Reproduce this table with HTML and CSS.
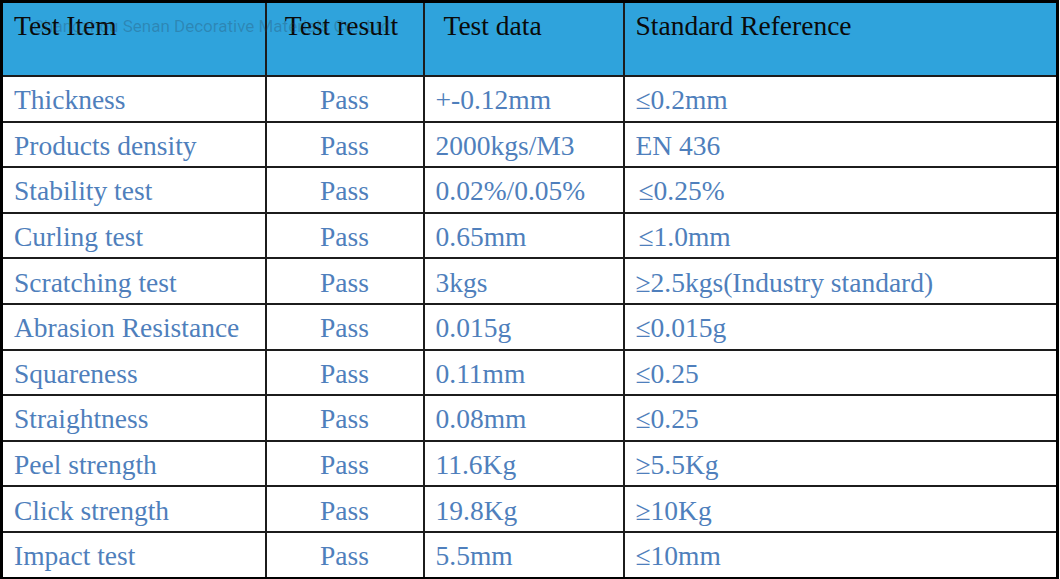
FILE: index.html
```
<!DOCTYPE html>
<html>
<head>
<meta charset="utf-8">
<link rel="stylesheet" href="styles.css">
</head>
<body>
<div class="wrap">
<table class="spec">
  <colgroup>
    <col class="c1"><col class="c2"><col class="c3"><col class="c4">
  </colgroup>
  <thead>
    <tr class="head">
      <th class="left">Test Item</th>
      <th class="center">Test result</th>
      <th class="left indent">Test data</th>
      <th class="left">Standard Reference</th>
    </tr>
  </thead>
  <tbody>
    <tr><td>Thickness</td><td class="center">Pass</td><td>+-0.12mm</td><td>≤0.2mm</td></tr>
    <tr><td>Products density</td><td class="center">Pass</td><td>2000kgs/M3</td><td>EN 436</td></tr>
    <tr><td>Stability test</td><td class="center">Pass</td><td>0.02%/0.05%</td><td class="sp">≤0.25%</td></tr>
    <tr><td>Curling test</td><td class="center">Pass</td><td>0.65mm</td><td class="sp">≤1.0mm</td></tr>
    <tr><td>Scratching test</td><td class="center">Pass</td><td>3kgs</td><td>≥2.5kgs(Industry standard)</td></tr>
    <tr><td>Abrasion Resistance</td><td class="center">Pass</td><td>0.015g</td><td>≤0.015g</td></tr>
    <tr><td>Squareness</td><td class="center">Pass</td><td>0.11mm</td><td>≤0.25</td></tr>
    <tr><td>Straightness</td><td class="center">Pass</td><td>0.08mm</td><td>≤0.25</td></tr>
    <tr><td>Peel strength</td><td class="center">Pass</td><td>11.6Kg</td><td>≥5.5Kg</td></tr>
    <tr><td>Click strength</td><td class="center">Pass</td><td>19.8Kg</td><td>≥10Kg</td></tr>
    <tr><td>Impact test</td><td class="center">Pass</td><td>5.5mm</td><td>≤10mm</td></tr>
  </tbody>
</table>
<div class="watermark">Changzhou Senan Decorative Materials Co., Ltd.</div>
</div>
</body>
</html>
```
FILE: styles.css
```
html, body {
  margin: 0;
  padding: 0;
  background: #ffffff;
}
.wrap {
  position: relative;
  width: 1060px;
  height: 579px;
  overflow: hidden;
}
.spec {
  border-collapse: collapse;
  width: 1059px;
  table-layout: fixed;
  border: 3px solid #000;
  font-family: "Liberation Serif", "Times New Roman", serif;
}
.c1 { width: 264px; }
.c2 { width: 158px; }
.c3 { width: 200px; }
.c4 { width: auto; }
.spec th, .spec td {
  border: 2px solid #1c1c1c;
  padding: 0 0 0 11px;
  white-space: nowrap;
}
.head th {
  background: #2fa3dc;
  color: #0a0a0a;
  font-weight: normal;
  font-size: 27.5px;
  height: 65px;
  vertical-align: top;
  padding-top: 7px;
  text-align: left;
}
.head th.center { text-align: center; padding-left: 0; padding-right: 6px; }
.head th.indent { padding-left: 19px; }
.spec td {
  color: #4f7fbc;
  font-size: 27.5px;
  height: 40.6px;
  line-height: 30px;
  vertical-align: middle;
  padding-top: 3px;
}
.spec td.center { text-align: center; padding-left: 0; }
.spec td.sp { padding-left: 14px; }
.watermark {
  position: absolute;
  left: 33px;
  top: 16px;
  font-family: Roboto, "Liberation Sans", sans-serif;
  font-size: 17px;
  color: rgba(40, 60, 80, 0.28);
  white-space: nowrap;
  pointer-events: none;
}
```
